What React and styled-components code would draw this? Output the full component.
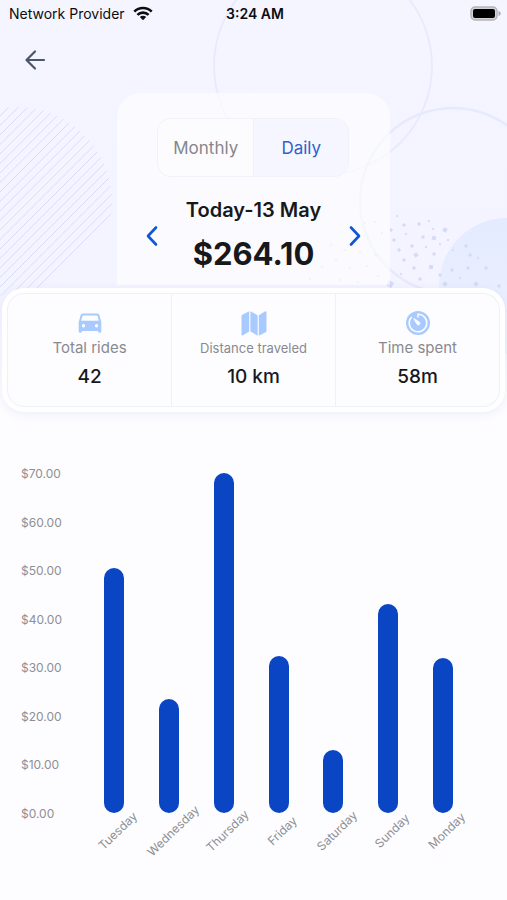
import React from 'react';
import styled, { createGlobalStyle } from 'styled-components';

const GlobalStyle = createGlobalStyle`
  * {
    box-sizing: border-box;
  }

  body {
    margin: 0;
    background: #fdfdff;
    color: #17181c;
    font-family: Inter, "Liberation Sans", sans-serif;
  }

  button {
    padding: 0;
    border: 0;
    background: none;
    color: inherit;
    font: inherit;
    cursor: pointer;
  }
`

const Page = styled.main`
  position: relative;
  padding-bottom: 32px;
`

const Backdrop = styled.svg`
  position: absolute;
  top: 0;
  left: 0;
  z-index: -1;
  width: 100%;
  height: 400px;
`

const StatusBar = styled.div`
  display: grid;
  grid-template-columns: 1fr auto 1fr;
  align-items: center;
  height: 26px;
  padding: 0 6px 0 9px;
  color: #0c0d10;
  font-size: 14px;
`

const Carrier = styled.span`
  display: flex;
  align-items: center;
  gap: 8px;
`

const Clock = styled.time`
  font-weight: 600;
`

const Battery = styled.svg`
  justify-self: end;
`

const TopBar = styled.header`
  display: flex;
  align-items: center;
  height: 67px;
  padding: 0 24px;
`

const IconButton = styled.button`
  display: flex;
  color: ${({ $color }) => $color};
`

const Summary = styled.section`
  width: 54%;
  min-width: 272px;
  margin: 0 auto;
  padding: 25px 24px 11px;
  border-radius: 24px 24px 0 0;
  background: rgba(255, 255, 255, 0.62);
`

const Toggle = styled.div`
  display: flex;
  width: 192px;
  height: 59px;
  margin: 0 auto;
  overflow: hidden;
  border: 1px solid #f0f1fa;
  border-radius: 14px;
`

const ToggleOption = styled.button`
  flex: 1;
  background: ${({ $active }) => ($active ? '#f5f6ff' : '#fcfcff')};
  color: ${({ $active }) => ($active ? '#2f62cb' : '#85868c')};
  font-size: 17px;

  & + & {
    border-left: 1px solid #eff0fa;
  }
`

const Period = styled.div`
  display: flex;
  align-items: center;
  justify-content: space-between;
  margin-top: 20px;
`

const PeriodText = styled.div`
  text-align: center;
`

const PeriodLabel = styled.h1`
  margin: 0;
  font-size: 20px;
  font-weight: 600;
  line-height: 26px;
`

const Amount = styled.p`
  margin: 11px 0 0;
  font-size: 31px;
  font-weight: 700;
  line-height: 40px;
`

const Stats = styled.section`
  display: flex;
  margin: 3px 2px 0;
  padding: 5px;
  border-radius: 22px;
  background: #fff;
  box-shadow: 0 2px 10px rgba(90, 100, 200, 0.1);
`

const Stat = styled.div`
  display: flex;
  flex: 1;
  flex-direction: column;
  align-items: center;
  height: 114px;
  padding-top: 16px;
  border: 1px solid #eef0fc;
  border-left-width: ${({ $first }) => ($first ? '1px' : '0')};
  background: #fdfdff;

  &:first-child {
    border-radius: 17px 0 0 17px;
  }

  &:last-child {
    border-radius: 0 17px 17px 0;
  }
`

const StatLabel = styled.span`
  color: #898a8f;
  font-size: ${({ $small }) => ($small ? '13px' : '15px')};
  line-height: 24px;
`

const StatValue = styled.strong`
  margin-top: 5px;
  font-size: 19px;
  font-weight: 500;
  line-height: 24px;
`

const Chart = styled.section`
  display: flex;
  margin: 54px 37px 0 21px;
`

const Axis = styled.div`
  display: flex;
  flex: none;
  flex-direction: column;
  justify-content: space-between;
  width: 66px;
  height: 356px;
  color: #8e8f94;
  font-size: 12px;
  line-height: 16px;
`

const Plot = styled.div`
  display: flex;
  flex: 1;
  min-width: 0;
  padding-top: 7px;
`

const Column = styled.div`
  display: flex;
  flex: 1;
  flex-direction: column;
  align-items: center;
  min-width: 0;
`

const Track = styled.div`
  display: flex;
  align-items: flex-end;
  height: 340px;
`

const Bar = styled.div`
  width: 20px;
  border-radius: 10px;
  background: #0a46c4;
`

const DayLabel = styled.span`
  margin: 10px 0 0 8px;
  color: #8e8f94;
  font-size: 12px;
  line-height: 16px;
  transform: rotate(-44deg);
`

const yTicks = [70, 60, 50, 40, 30, 20, 10, 0];
const maxValue = 70;

const earnings = [
  { day: 'Tuesday', value: 50.4 },
  { day: 'Wednesday', value: 23.5 },
  { day: 'Thursday', value: 70 },
  { day: 'Friday', value: 32.4 },
  { day: 'Saturday', value: 13 },
  { day: 'Sunday', value: 43 },
  { day: 'Monday', value: 32 },
];

const dots = [
  [397, 216, 2], [404, 225, 3], [419, 224, 3], [429, 221, 2], [391, 230, 3], [433, 229, 2],
  [445, 230, 4], [406, 234, 2], [394, 240, 3], [423, 237, 3], [434, 238, 4], [448, 240, 2],
  [412, 246, 3], [426, 247, 2], [440, 244, 2], [399, 250, 3], [416, 255, 4], [434, 254, 3],
  [453, 250, 2], [466, 246, 3], [470, 255, 3], [478, 258, 2], [404, 260, 3], [414, 268, 3],
  [431, 267, 4], [452, 270, 3], [468, 268, 3], [486, 268, 3], [390, 284, 6], [401, 274, 2],
  [420, 279, 3], [440, 275, 3], [445, 284, 4], [460, 278, 2], [476, 284, 4], [499, 286, 3],
  [365, 223, 2], [375, 222, 2], [382, 233, 2], [368, 238, 2], [352, 240, 2], [345, 250, 2],
  [331, 245, 2], [360, 252, 2], [376, 255, 3], [336, 260, 2], [322, 267, 2], [350, 268, 2],
  [367, 266, 2], [378, 276, 2], [310, 279, 2], [340, 280, 2], [358, 282, 2],
];

const ArrowLeft = () => (
  <svg width="22" height="22" viewBox="0 0 22 22" fill="none" stroke="currentColor" strokeWidth="2.200" strokeLinecap="round" strokeLinejoin="round">
    <path d="M20 11H3M11 2.500L2.500 11l8.500 8.500" />
  </svg>
);

const Chevron = ({ points }) => (
  <svg width="20" height="24" viewBox="0 0 20 24" fill="none" stroke="currentColor" strokeWidth="2.600" strokeLinecap="round" strokeLinejoin="round">
    <polyline points={points} />
  </svg>
);

const CarIcon = () => (
  <svg width="26" height="26" viewBox="0 0 26 26" aria-hidden="true">
    <path fill="#a9caff" fillRule="evenodd" d="M6 3.500h14c1.300 0 2.300.8 2.500 2L24.300 12v9.500c0 .7-.5 1.200-1.200 1.200h-.8c-.7 0-1.200-.5-1.200-1.200V21H4.900v.5c0 .7-.5 1.200-1.200 1.200h-.8c-.7 0-1.200-.5-1.200-1.200V12l1.800-6.500c.2-1.200 1.200-2 2.500-2zM6.300 5.500c-.5 0-.8.200-.9.700L4.200 10.700h17.600l-1.200-4.500c-.1-.5-.4-.7-.9-.7zM6.500 14a1.700 1.700 0 1 0 0 3.400 1.700 1.700 0 0 0 0-3.400zM19.500 14a1.700 1.700 0 1 0 0 3.400 1.700 1.700 0 0 0 0-3.400z" />
  </svg>
);

const MapIcon = () => (
  <svg width="26" height="26" viewBox="0 0 26 26" fill="#a9caff" aria-hidden="true">
    <path d="M8.200 1.200v20.300L2 25.300c-.8.400-1.500 0-1.500-.9V6.200c0-.7.3-1.200.9-1.500z" />
    <path d="M9.400 1.200l7.200 4v20.500l-7.200-4.200z" />
    <path d="M17.800 5.200L24 1.500c.8-.4 1.500 0 1.500.9v18.400c0 .7-.3 1.200-.9 1.500l-6.800 3.500z" />
  </svg>
);

const TimerIcon = () => (
  <svg width="26" height="26" viewBox="0 0 26 26" fill="none" aria-hidden="true">
    <circle cx="13" cy="13" r="12" fill="#a9caff" />
    <path d="M13 7V4.200a8.800 8.800 0 1 1-6.800 3.200" stroke="#fdfdff" strokeWidth="1.500" strokeLinecap="round" />
    <path d="M8.800 8.600l5.300 3.300a1.600 1.600 0 1 1-2.200 2.200z" fill="#fdfdff" stroke="#fdfdff" strokeLinejoin="round" />
  </svg>
);

const stats = [
  { label: 'Total rides', value: '42', Icon: CarIcon },
  { label: 'Distance traveled', value: '10 km', Icon: MapIcon, small: true },
  { label: 'Time spent', value: '58m', Icon: TimerIcon },
];

const HeaderArt = () => (
  <Backdrop viewBox="0 0 507 400" preserveAspectRatio="xMidYMin slice" aria-hidden="true">
    <defs>
      <linearGradient id="sky" x1="0" y1="0" x2="0" y2="1">
        <stop offset="0" stopColor="#f4f5ff" />
        <stop offset="0.750" stopColor="#f3f4ff" />
        <stop offset="1" stopColor="#fdfdff" />
      </linearGradient>
      <linearGradient id="orb" x1="0" y1="0" x2="0" y2="1">
        <stop offset="0" stopColor="#e4ebff" />
        <stop offset="1" stopColor="#eef2ff" />
      </linearGradient>
      <clipPath id="disc">
        <circle cx="17" cy="202" r="95" />
      </clipPath>
    </defs>
    <rect width="507" height="400" fill="url(#sky)" />
    <g clipPath="url(#disc)" stroke="#d6ddfa" strokeWidth="1">
      {Array.from({ length: 31 }, (_, i) => (
        <line key={i} x1="-80" y1={120 + i * 9.500} x2="120" y2={i * 9.500 - 80} />
      ))}
    </g>
    <circle cx="323" cy="66" r="109" fill="none" stroke="#e9ebfc" strokeWidth="2" />
    <circle cx="453" cy="201" r="93" fill="none" stroke="#e5eafc" strokeWidth="2.500" />
    <circle cx="507" cy="286" r="68" fill="url(#orb)" />
    {dots.map(([x, y, size]) => (
      <rect key={`${x}-${y}`} x={x - size / 2} y={y - size / 2} width={size} height={size} rx="0.500" fill="#d5daf7" transform={`rotate(${x % 60} ${x} ${y})`} />
    ))}
  </Backdrop>
);

const EarningsChart = () => (
  <Chart aria-label="Earnings by day">
    <Axis>
      {yTicks.map(tick => (
        <span key={tick}>${tick.toFixed(2)}</span>
      ))}
    </Axis>
    <Plot>
      {earnings.map(({ day, value }) => (
        <Column key={day}>
          <Track>
            <Bar style={{ height: `${(value / maxValue) * 100}%` }} />
          </Track>
          <DayLabel>{day}</DayLabel>
        </Column>
      ))}
    </Plot>
  </Chart>
);

export default function App() {
  const [range, setRange] = React.useState('Daily');

  return (
    <>
      <GlobalStyle />
      <Page>
        <HeaderArt />
        <StatusBar>
          <Carrier>
            Network Provider
            <svg width="20" height="15" viewBox="0 0 20 15" fill="none" stroke="#0c0d10" strokeWidth="2.600" aria-hidden="true">
              <path d="M1.300 5.600a12.400 12.400 0 0 1 17.400 0M4.400 8.900a8 8 0 0 1 11.200 0" />
              <path d="M10 14.300L6.800 11a4.600 4.600 0 0 1 6.400 0z" fill="#0c0d10" stroke="none" />
            </svg>
          </Carrier>
          <Clock>3:24 AM</Clock>
          <Battery width="31" height="15" viewBox="0 0 31 15" aria-hidden="true">
            <rect x="1" y="1" width="26" height="13" rx="4" fill="#d2d2d8" stroke="#b4b4b9" strokeWidth="1.500" />
            <rect x="3" y="3" width="22" height="9" rx="2" fill="#000" />
            <path d="M28.500 5v5c1.500-.4 2.200-1.400 2.200-2.500S30 5.400 28.500 5z" fill="#a9a9ae" />
          </Battery>
        </StatusBar>
        <TopBar>
          <IconButton $color="#4c566b" aria-label="Back"><ArrowLeft /></IconButton>
        </TopBar>
        <Summary>
          <Toggle>
            {['Monthly', 'Daily'].map(option => (
              <ToggleOption
                key={option}
                $active={option === range}
                aria-pressed={option === range}
                onClick={() => setRange(option)}
              >
                {option}
              </ToggleOption>
            ))}
          </Toggle>
          <Period>
            <IconButton $color="#0c56d8" aria-label="Previous day"><Chevron points="15,3.500 7,12 15,20.500" /></IconButton>
            <PeriodText>
              <PeriodLabel>Today-13 May</PeriodLabel>
              <Amount>$264.10</Amount>
            </PeriodText>
            <IconButton $color="#0c56d8" aria-label="Next day"><Chevron points="5,3.500 13,12 5,20.500" /></IconButton>
          </Period>
        </Summary>
        <Stats>
          {stats.map(({ label, value, Icon, small }, index) => (
            <Stat key={label} $first={index === 0}>
              <Icon />
              <StatLabel $small={small}>{label}</StatLabel>
              <StatValue>{value}</StatValue>
            </Stat>
          ))}
        </Stats>
        <EarningsChart />
      </Page>
    </>
  );
}
